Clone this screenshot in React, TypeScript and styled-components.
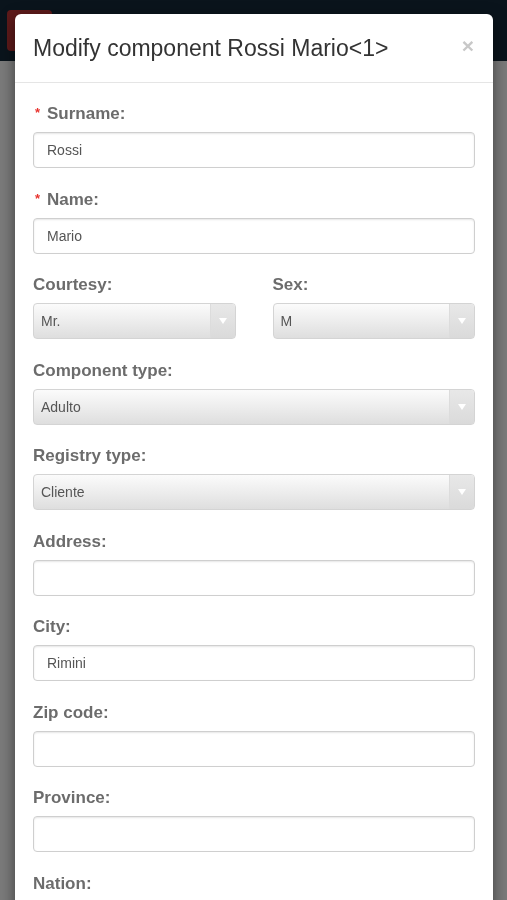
import React from "react";
import styled, { createGlobalStyle } from "styled-components";

const Global = createGlobalStyle`
  html, body { margin: 0; padding: 0; }
  body {
    background: #7b7b7b;
    font-family: "Liberation Sans", Arial, sans-serif;
    height: 900px;
    overflow: hidden;
  }
`;

const Navbar = styled.div`
  height: 61px;
  background: #0a141c;
  display: flex;
  align-items: flex-start;
  padding: 10px 0 0 7px;
  box-sizing: border-box;
`;

const NavButton = styled.div`
  width: 45px;
  height: 41px;
  border-radius: 4px;
  background: #5e1a1a;
`;

const Overlay = styled.div`
  position: fixed;
  inset: 0;
  padding: 14px 14px 0 15px;
  box-sizing: border-box;
`;

const Modal = styled.div`
  background: #fff;
  border-radius: 6px;
  box-shadow: 0 5px 15px rgba(0, 0, 0, 0.5);
  height: 940px;
`;

const Header = styled.div`
  height: 68px;
  border-bottom: 1px solid #e5e5e5;
  display: flex;
  align-items: center;
  justify-content: space-between;
  padding: 0 19px 0 18px;
`;

const Title = styled.h4`
  margin: 0;
  font-size: 23px;
  font-weight: normal;
  color: #333;
`;

const Close = styled.span`
  font-size: 21px;
  font-weight: bold;
  color: #c8c8c8;
  line-height: 1;
  margin-top: -6px;
`;

const Body = styled.div`
  padding: 21px 18px 0;
`;

const Group = styled.div`
  margin-bottom: 21.5px;
`;

const Row = styled.div`
  display: grid;
  grid-template-columns: 1fr 1fr;
  column-gap: 37px;
`;

const Label = styled.div`
  display: flex;
  align-items: center;
  height: 20px;
  margin-bottom: 8px;
  font-size: 17px;
  font-weight: bold;
  color: #6c6c6c;
`;

const Star = styled.span`
  color: #e8332e;
  font-size: 13px;
  width: 14px;
  padding-left: 2px;
  box-sizing: border-box;
  align-self: flex-start;
  margin-top: 1px;
`;

const Input = styled.div`
  height: 36px;
  box-sizing: border-box;
  border: 1px solid #cfcfcf;
  border-radius: 4px;
  box-shadow: inset 0 1px 2px rgba(0, 0, 0, 0.1);
  padding: 0 13px;
  display: flex;
  align-items: center;
  font-size: 14px;
  color: #555;
`;

const Select = styled.div`
  height: 36px;
  box-sizing: border-box;
  border: 1px solid #d4d4d4;
  border-radius: 4px;
  background: linear-gradient(to bottom, #fbfbfb 0%, #ededed 50%, #dedede 100%);
  display: flex;
  align-items: stretch;
  font-size: 14px;
  color: #555;
  overflow: hidden;
`;

const SelectText = styled.div`
  flex: 1;
  display: flex;
  align-items: center;
  padding-left: 7px;
`;

const Arrow = styled.div`
  width: 24px;
  display: flex;
  align-items: center;
  justify-content: center;
  background: linear-gradient(to bottom, #e8e8e8, #dadada);
  border-left: 1px solid #dcdcdc;
  &::after {
    content: "";
    width: 0;
    height: 0;
    border-left: 4px solid transparent;
    border-right: 4px solid transparent;
    border-top: 6px solid #fff;
  }
`;

const TextField = ({ label, value, required }: { label: string; value?: string; required?: boolean }) => (
  <Group>
    <Label>
      {required && <Star>*</Star>}
      {label}
    </Label>
    <Input>{value}</Input>
  </Group>
);

const SelectField = ({ label, value }: { label: string; value: string }) => (
  <Group>
    <Label>{label}</Label>
    <Select>
      <SelectText>{value}</SelectText>
      <Arrow />
    </Select>
  </Group>
);

export default function App() {
  return (
    <>
      <Global />
      <Navbar>
        <NavButton />
      </Navbar>
      <Overlay>
        <Modal>
          <Header>
            <Title>Modify component Rossi Mario&lt;1&gt;</Title>
            <Close>×</Close>
          </Header>
          <Body>
            <TextField label="Surname:" value="Rossi" required />
            <TextField label="Name:" value="Mario" required />
            <Row>
              <SelectField label="Courtesy:" value="Mr." />
              <SelectField label="Sex:" value="M" />
            </Row>
            <SelectField label="Component type:" value="Adulto" />
            <SelectField label="Registry type:" value="Cliente" />
            <TextField label="Address:" />
            <TextField label="City:" value="Rimini" />
            <TextField label="Zip code:" />
            <TextField label="Province:" />
            <TextField label="Nation:" />
          </Body>
        </Modal>
      </Overlay>
    </>
  );
}
